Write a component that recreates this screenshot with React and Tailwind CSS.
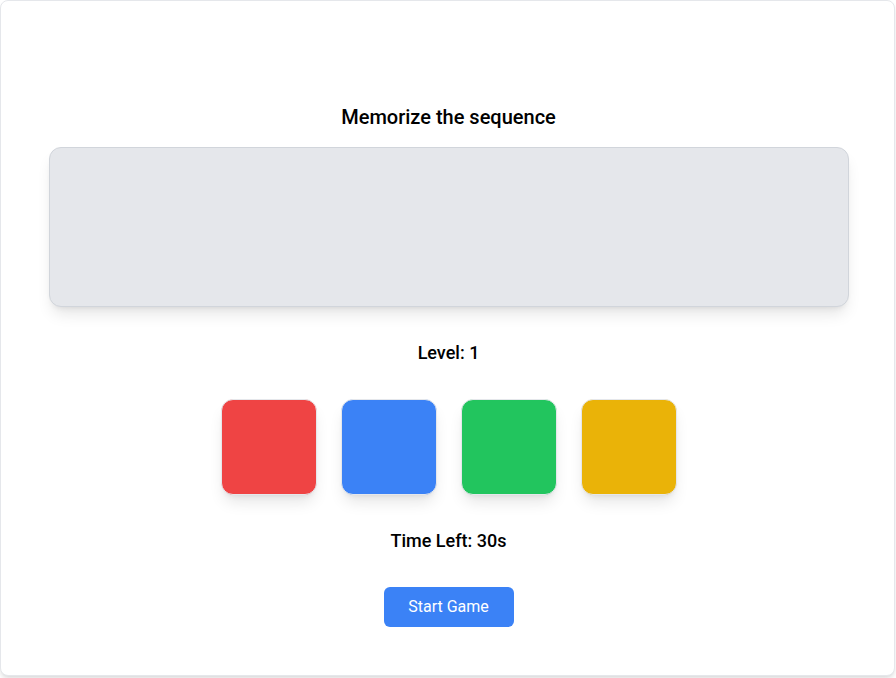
export default function App() {
  const colors = ["bg-[#ef4444]", "bg-[#3b82f6]", "bg-[#22c55e]", "bg-[#eab308]"]

  return (
    <div className="min-h-screen bg-white" style={{ fontFamily: "Roboto, 'Noto Sans', sans-serif" }}>
      <div className="w-[895px] h-[676px] bg-white border border-[#e5e7eb] rounded-lg shadow-md flex flex-col items-center pt-[102px] pl-0.5">
        <h2 className="text-xl leading-7 font-medium text-black mb-4">Memorize the sequence</h2>
        <div className="w-[800px] h-40 bg-[#e5e7eb] border border-[#d1d5db] rounded-xl shadow-lg" />
        <p className="mt-8 text-lg leading-7 font-medium text-black">Level: 1</p>
        <div className="mt-8 flex gap-6">
          {colors.map((c) => (
            <div key={c} className={`w-24 h-24 ${c} rounded-xl border border-[#e5e7eb] shadow-lg`} />
          ))}
        </div>
        <p className="mt-8 text-lg leading-7 font-medium text-black">Time Left: 30s</p>
        <button className="mt-8 w-[130px] h-10 bg-[#3b82f6] text-white rounded-md text-base">Start Game</button>
      </div>
    </div>
  )
}
